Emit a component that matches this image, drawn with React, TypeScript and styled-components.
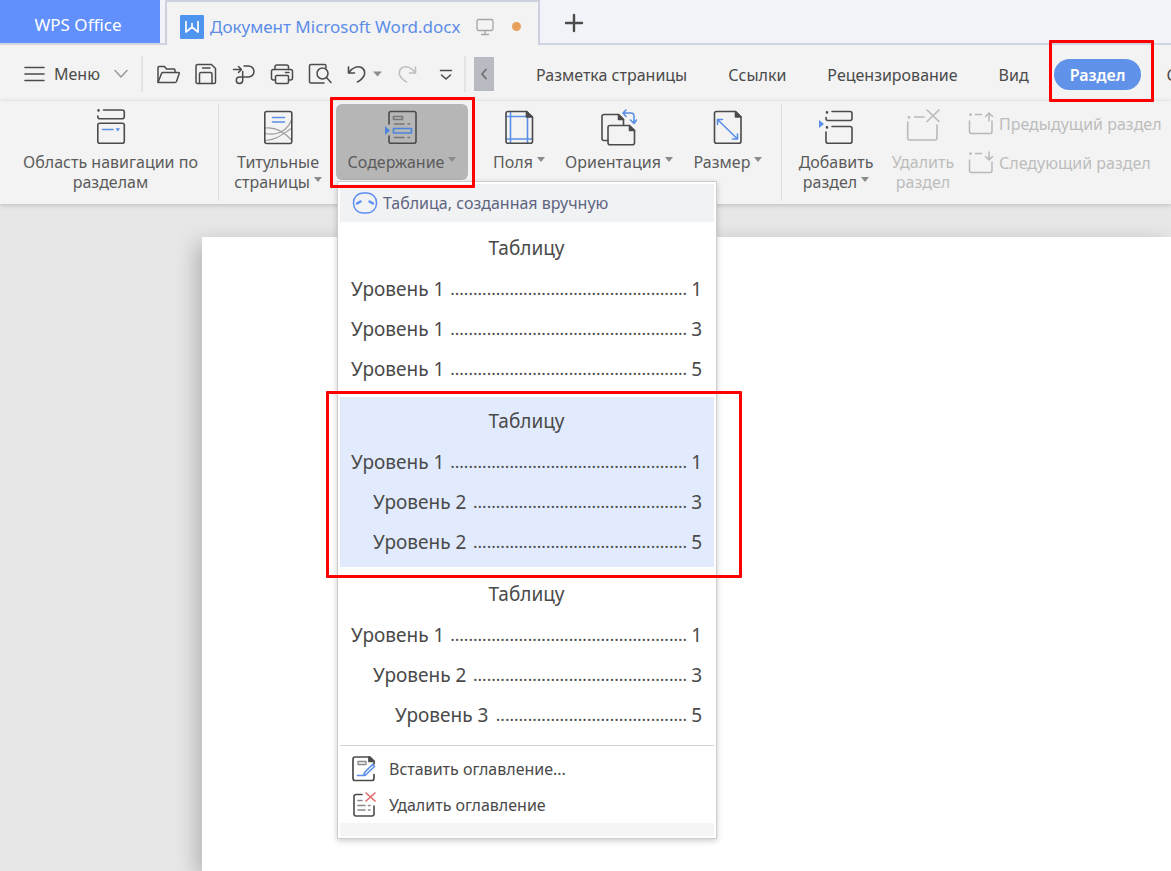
import React from 'react';
import styled, { createGlobalStyle, css } from 'styled-components';

const ink = '#4b4b4b';
const blue = '#5b8fe6';
const grey = '#b9b9b9';

const GlobalStyle = createGlobalStyle`
  *, *::before, *::after { box-sizing: border-box; }
  body {
    margin: 0;
    font-family: "Noto Sans", "Open Sans", sans-serif;
    font-size: 16px;
    line-height: 20px;
    color: #4a4a4a;
    background: #e7e7e7;
  }
  button { font: inherit; color: inherit; background: none; border: 0; padding: 0; margin: 0; cursor: pointer; }
  svg { display: block; fill: none; stroke-linecap: round; stroke-linejoin: round; flex: none; }
`;

const Window = styled.div`
  display: flex;
  flex-direction: column;
  min-height: 100vh;
  overflow: hidden;
`;

/* ---------- title bar ---------- */

const TitleBar = styled.header`
  display: flex;
  height: 45px;
  background: #f2f3f8;
`;

const HomeTab = styled.button`
  width: 160px;
  height: 43px;
  padding: 7px 4px 0 0;
  font-size: 17px;
  color: #fff;
  background: #618ffc;
`;

const StripEdge = styled.div<{ $fill?: boolean }>`
  display: flex;
  border-bottom: 2px solid #cfd5e2;
  padding-right: ${p => (p.$fill ? 0 : '5px')};
  flex: ${p => (p.$fill ? '1' : 'none')};
`;

const DocumentTab = styled.div`
  display: flex;
  align-items: center;
  width: 375px;
  padding: 6px 14px 0 13px;
  border: 2px solid #cbd1de;
  border-bottom: 0;
  background: #f3f3f3;
  color: #5c8de8;
  white-space: nowrap;
`;

const DocumentName = styled.span`
  flex: none;
  margin: 0 16px 0 6px;
  font-size: 17px;
`;

const UnsavedDot = styled.span`
  width: 9px;
  height: 9px;
  margin-left: 18px;
  border-radius: 50%;
  background: #e8a15a;
`;

const NewTab = styled.button`
  margin: 3px 0 0 24px;
`;

/* ---------- menu row ---------- */

const MenuRow = styled.div`
  display: flex;
  align-items: center;
  height: 56px;
  padding: 2px 0 0 24px;
  background: #f3f3f3;
  white-space: nowrap;
`;

const MainMenu = styled.button`
  display: flex;
  align-items: center;
  gap: 9px;
  flex: none;
  width: 117px;
`;

const MenuLabel = styled.span`
  margin-right: 4px;
`;

const Divider = styled.span`
  flex: none;
  width: 2px;
  height: 36px;
  background: #e3e3e3;
`;

const QuickTools = styled.div`
  display: flex;
  align-items: center;
  gap: 14px;
  width: 321px;
  flex: none;
  padding-left: 13px;
`;

const SplitTool = styled.button`
  display: flex;
  align-items: center;
  gap: 3px;
`;

const ScrollTabs = styled.button`
  display: grid;
  place-items: center;
  flex: none;
  width: 20px;
  height: 34px;
  margin-left: 8px;
  background: #b8bbc2;
`;

const RibbonTabs = styled.nav`
  display: flex;
  gap: 9px;
  padding-left: 26px;
`;

const RibbonTab = styled.button<{ $active?: boolean }>`
  position: relative;
  flex: none;
  height: 31px;
  padding: 1px 16px 0;
  border-radius: 16px;
  ${p => p.$active && css`
    color: #fff;
    font-weight: 600;
    background: #5f92e8;
  `}
`;

/* Red frame that points the reader at a control; $inset is top right bottom left. */
const Callout = styled.span<{ $inset: string }>`
  position: absolute;
  inset: ${p => p.$inset};
  border: 3px solid #fe0000;
  border-radius: 1px;
  pointer-events: none;
  z-index: 5;
`;

/* ---------- ribbon ---------- */

const Ribbon = styled.section`
  position: relative;
  z-index: 2;
  display: flex;
  height: 103px;
  padding-top: 3px;
  background: #f3f3f3;
  color: #5b5b5b;
  white-space: nowrap;
  box-shadow: 0 1px 5px rgba(0, 0, 0, 0.2);
`;

const Group = styled.div<{ $pad: string; $rule?: boolean }>`
  display: flex;
  flex: none;
  gap: 4px;
  padding: ${p => p.$pad};
  height: 97px;
  ${p => p.$rule && css`border-right: 1px solid #dedede;`}
`;

const BigButton = styled.button<{ $width: number; $pressed?: boolean }>`
  display: flex;
  flex-direction: column;
  align-items: center;
  gap: 6px;
  width: ${p => p.$width}px;
  height: ${p => (p.$pressed ? '76px' : '94px')};
  padding-top: 4px;
  border-radius: 6px;
  background: ${p => (p.$pressed ? '#b6b6b6' : 'none')};
  &:disabled { color: #bdbdbd; }
`;

const Anchor = styled.div`
  position: relative;
  height: 76px;
`;

const Caret = styled.span`
  display: inline-block;
  margin-left: 4px;
  vertical-align: 6px;
  border: 4px solid transparent;
  border-top: 5px solid #8a8a8a;
  border-bottom: 0;
`;

const SmallStack = styled.div`
  display: flex;
  flex-direction: column;
  gap: 15px;
  padding: 8px 0 0 8px;
`;

const SmallButton = styled.button`
  display: flex;
  align-items: center;
  gap: 5px;
  height: 24px;
  &:disabled { color: #bdbdbd; }
`;

/* ---------- contents menu ---------- */

const Menu = styled.div`
  position: absolute;
  top: 77px;
  left: 1px;
  width: 380px;
  padding: 2px;
  border: 1px solid #cdcdcd;
  background: #fff;
  box-shadow: 0 2px 6px rgba(0, 0, 0, 0.2);
  color: #4a4a4a;
`;

const MenuHeading = styled.div`
  display: flex;
  align-items: center;
  gap: 5px;
  height: 38px;
  margin-bottom: 2px;
  padding-left: 12px;
  background: #f1f2f4;
  color: #5f6480;
`;

const Preview = styled.button<{ $hot?: boolean }>`
  position: relative;
  display: block;
  width: 100%;
  height: 170px;
  margin-bottom: 3px;
  padding: 3px 12px 5px 11px;
  font-size: 19px;
  background: ${p => (p.$hot ? '#e2ebfd' : 'none')};
`;

const PreviewTitle = styled.span`
  display: block;
  line-height: 42px;
`;

const Line = styled.span<{ $level: number }>`
  display: flex;
  gap: 4px;
  line-height: 40px;
  padding-left: ${p => (p.$level - 1) * 22}px;
`;

const Leader = styled.span`
  flex: 1;
  text-align: right;
  font-size: 17px;
`;

const Commands = styled.div`
  margin-top: 5px;
  padding-top: 5px;
  border-top: 1px solid #d4d4d4;
`;

const Command = styled.button`
  display: flex;
  align-items: center;
  gap: 13px;
  width: 100%;
  height: 36px;
  padding-left: 12px;
`;

const MenuFoot = styled.div`
  height: 13px;
  background: #f5f5f5;
`;

/* ---------- document ---------- */

const Workspace = styled.main`
  display: flex;
  flex: 1;
  padding: 33px 0 0 202px;
  background: #e7e7e7;
`;

const Sheet = styled.div`
  flex: 1;
  background: #fff;
  box-shadow: -6px 6px 20px rgba(0, 0, 0, 0.22);
`;

/* ---------- icons ---------- */

type IconProps = { w?: number; h?: number; color?: string; sw?: number; children: React.ReactNode };
const Icon = ({ w = 24, h = 24, color = ink, sw = 1.5, children }: IconProps) => (
  <svg width={w} height={h} viewBox={`0 0 ${w} ${h}`} stroke={color} strokeWidth={sw} aria-hidden="true">
    {children}
  </svg>
);
const BigIcon = ({ color, children }: { color?: string; children: React.ReactNode }) => (
  <Icon w={36} h={38} sw={1.6} color={color}>{children}</Icon>
);

const previews = [
  { levels: [1, 1, 1] },
  { levels: [1, 2, 2], hot: true },
  { levels: [1, 2, 3] },
];
const pages = [1, 3, 5];

export default function App() {
  return (
    <Window>
      <GlobalStyle />
      <TitleBar>
        <StripEdge>
          <HomeTab>WPS Office</HomeTab>
        </StripEdge>
        <DocumentTab>
          <svg width="24" height="24" viewBox="0 0 24 24" aria-hidden="true">
            <rect width="24" height="24" rx="1" fill="#4f95f0" />
            <path d="M6 6.5V17l6-5 6 5V6.500M12 8.500V12" stroke="#fff" strokeWidth="1.700" />
          </svg>
          <DocumentName>Документ Microsoft Word.docx</DocumentName>
          <Icon w={18} h={18} color="#a5a5a5" sw={1.3}>
            <rect x="1" y="1.500" width="16" height="11" rx="1.500" />
            <path d="M9 12.500V16.500M5.500 16.500h7" />
          </Icon>
          <UnsavedDot />
        </DocumentTab>
        <StripEdge $fill>
          <NewTab aria-label="Новая вкладка">
            <Icon w={20} h={20} sw={2.4}><path d="M10 2v16M2 10h16" /></Icon>
          </NewTab>
        </StripEdge>
      </TitleBar>

      <MenuRow>
        <MainMenu>
          <Icon w={21} h={16} sw={1.6}><path d="M1 1.500h19M1 8h19M1 14.500h19" /></Icon>
          <MenuLabel>Меню</MenuLabel>
          <Icon w={16} h={10} color="#9a9a9a" sw={1.5}><path d="M2 1.500l6 6.500 6-6.500" /></Icon>
        </MainMenu>
        <Divider />
        <QuickTools>
          <button aria-label="Открыть">
            <Icon>
              <path d="M2 20V5.500q0-1 1-1h5.500l2 2.500H18q1 0 1 1V10.500" />
              <path d="M2 20.500 5.500 11.500q.4-1 1.500-1h15.500q1 0 .7 1L20.500 19.500q-.4 1-1.500 1z" />
            </Icon>
          </button>
          <button aria-label="Сохранить">
            <Icon>
              <path d="M2 4q0-1.500 1.500-1.500H17.500L21.500 6.500V20q0 1.500-1.500 1.500H3.500Q2 21.500 2 20z" />
              <path d="M5.500 21.500V12q0-1.500 1.500-1.500h9.500q1.500 0 1.500 1.500v9.500M8.500 6H16" />
            </Icon>
          </button>
          <button aria-label="Экспорт в PDF">
            <Icon>
              <path d="M1.500 7.500H9M6.500 4.500l3 3-3 3" />
              <path d="M12 4h4.500a5.500 5.500 0 0 1 0 11H7.500a3.200 3.200 0 1 0 3.200 3.200V9.500" />
            </Icon>
          </button>
          <button aria-label="Печать">
            <Icon>
              <path d="M5 7.500V5q0-2 2-2H16.500q2 0 2 2V7.500" />
              <path d="M5.500 18H3.500Q1.500 18 1.500 16V9.500q0-2 2-2H20.500q2 0 2 2V16q0 2-2 2H18.500M15.500 10.500h3.500" />
              <path d="M5.500 14.500q0-1 1-1h11q1 0 1 1V20q0 1.500-1.500 1.500H7q-1.500 0-1.500-1.500z" />
            </Icon>
          </button>
          <button aria-label="Предварительный просмотр">
            <Icon>
              <path d="M16 21H3Q1.500 21 1.500 19.500V4Q1.500 2.500 3 2.500H16.500q1.500 0 1.500 1.500V6" />
              <circle cx="14.500" cy="11.500" r="5.500" />
              <path d="M18.500 15.500l4.500 5" />
            </Icon>
          </button>
          <SplitTool aria-label="Отменить">
            <Icon sw={1.6}><path d="M2.500 5v6H8.500M3 10.500C6 5.500 12 3.500 15.500 5.500q4 2.500 3 7Q17 17 11.500 20" /></Icon>
            <Icon w={9} h={6} color="none"><path d="M0 .5h9L4.500 5.500z" fill="#8e8e8e" /></Icon>
          </SplitTool>
          <button aria-label="Повторить">
            <Icon color="#c0c0c0" sw={1.6}><path d="M19.500 5v6H13.500M19 10.500C16 5.500 10 3.500 6.500 5.500q-4 2.500-3 7Q5 17 10.500 20" /></Icon>
          </button>
          <button aria-label="Настроить панель">
            <Icon sw={1.6}><path d="M6.500 8.500h11M7.500 13l4.500 4 4.500-4" /></Icon>
          </button>
        </QuickTools>
        <Divider />
        <ScrollTabs aria-label="Прокрутить вкладки">
          <Icon w={8} h={12} color="#6e6e6e" sw={1.8}><path d="M6 1.500L2 6l4 4.500" /></Icon>
        </ScrollTabs>
        <RibbonTabs>
          <RibbonTab>Разметка страницы</RibbonTab>
          <RibbonTab>Ссылки</RibbonTab>
          <RibbonTab>Рецензирование</RibbonTab>
          <RibbonTab>Вид</RibbonTab>
          <RibbonTab $active>
            Раздел
            <Callout $inset="-19px -13px -12px -5px" />
          </RibbonTab>
          <RibbonTab>С</RibbonTab>
        </RibbonTabs>
      </MenuRow>

      <Ribbon>
        <Group $pad="0 5px 0 8px" $rule>
          <BigButton $width={205}>
            <BigIcon>
              <path d="M10.500 2H29q2.300 0 2.300 2V8.500q0 2.300-2.300 2.300H7Q4.800 10.800 4.800 8.500V8" />
              <rect x="4.800" y="15.300" width="26.500" height="20" rx="2" />
              <path d="M5.500 2.200v.3" strokeWidth="2.500" />
              <path d="M9.500 21.500H20" stroke={blue} />
              <path d="M22.500 20.300h4.500L24.800 23.500z" fill={blue} stroke="none" />
            </BigIcon>
            <span>Область навигации по<br />разделам</span>
          </BigButton>
        </Group>

        <Group $pad="0 4px 0 5px">
          <BigButton $width={108}>
            <BigIcon>
              <g stroke="#9b9b9b" strokeWidth="1.200">
                <path d="M5.500 20C17 18.500 25 25 31 31.500" />
                <path d="M5.500 25.500C14 27.500 26 25.500 31.500 12" />
                <path d="M5.500 32.500C17 32 23 25.500 31.500 20.500" />
              </g>
              <rect x="4.800" y="3.500" width="27" height="32" rx="2" />
              <path d="M12.500 9.500H24.500M12.500 14H24.500" stroke={blue} />
            </BigIcon>
            <span>Титульные<br />страницы<Caret /></span>
          </BigButton>
          <Anchor>
            <BigButton $width={132} $pressed aria-expanded="true">
              <BigIcon>
                <path d="M5 16V5.500q0-2 2-2H30q2 0 2 2V33.300q0 2-2 2H7q-2 0-2-2V28" />
                <g stroke="#777">
                  <rect x="9.500" y="8.500" width="9" height="3" />
                  <path d="M10.500 16H20M24 16h1.500M10.500 29.500H20M24 29.500h1.500" />
                </g>
                <rect x="9.500" y="20.500" width="18" height="4.500" stroke="#4c83dc" />
                <path d="M1 18l5 4.500-5 4.500z" fill="#4c83dc" stroke="none" />
              </BigIcon>
              <span>Содержание<Caret /></span>
            </BigButton>
            <Menu>
              <MenuHeading>
                <Icon w={26} h={22} color="#5b8df5" sw={1.5}>
                  <rect x="1.500" y="1" width="23" height="20" rx="9.500" />
                  <path d="M5 11.500l3.500-2M21 11.500l-3.500-2" strokeWidth="2.500" />
                </Icon>
                Таблица, созданная вручную
              </MenuHeading>
              {previews.map((p, i) => (
                <Preview key={i} $hot={p.hot}>
                  <PreviewTitle>Таблицу</PreviewTitle>
                  {p.levels.map((level, n) => (
                    <Line key={n} $level={level}>
                      <span>Уровень {level}</span>
                      <Leader>{'.'.repeat(57 - level * 5)}</Leader>
                      <span>{pages[n]}</span>
                    </Line>
                  ))}
                  {p.hot && <Callout $inset="-6px -28px -11px -14px" />}
                </Preview>
              ))}
              <Commands>
                <Command>
                  <Icon w={24} h={26} sw={1.7}>
                    <path d="M22 18.500V22q0 2.500-2 2.500H3Q1 24.500 1 22V3.500Q1 1 3 1H18L22 5V8" />
                    <path d="M17 1v4.500h4.500z" fill={ink} />
                    <rect x="6" y="5.500" width="8" height="3" stroke="#888" strokeWidth="1.300" />
                    <path d="M5.500 19.500H13L22.500 10.500 20.500 8.500 12.500 16.500 12 19.500" stroke={blue} />
                  </Icon>
                  Вставить оглавление...
                </Command>
                <Command>
                  <Icon w={24} h={26} sw={1.6}>
                    <path d="M10 2.500H4Q2 2.500 2 4.500V22q0 2 2 2H20q2 0 2-2V14" />
                    <path d="M6 8.500H10M6 13.500H13M16.500 13.500h1.500M6 18H13M16.500 18h1.500" stroke="#888" />
                    <path d="M14 1l9 8M23 1l-9 8" stroke="#e0696c" />
                  </Icon>
                  Удалить оглавление
                </Command>
              </Commands>
              <MenuFoot />
            </Menu>
            <Callout $inset="-7px -7px -8px -6px" />
          </Anchor>
        </Group>

        <Group $pad="0 7px 0 10px" $rule>
          <BigButton $width={74}>
            <BigIcon>
              <path d="M9.500 4V35M26.500 4V35M5 8.500H31M5 31H31" stroke={blue} />
              <path d="M25.500 3.500H7Q5 3.500 5 5.500V33.300q0 2 2 2H29.500q2 0 2-2V9z" />
              <path d="M25.500 3.500V9H31z" fill={ink} />
            </BigIcon>
            <span>Поля<Caret /></span>
          </BigButton>
          <BigButton $width={118}>
            <BigIcon>
              <path d="M7 32.500H3q-2 0-2-2V8.500q0-2 2-2H17.500L22.500 11.500V17" />
              <path d="M17.500 6.500v5h5z" fill={ink} />
              <path d="M28 17.500H9q-2 0-2 2V34.700q0 2 2 2H31.500q2 0 2-2V22.500z" />
              <path d="M28.500 17.500v5h5z" fill={ink} />
              <path d="M22.500 5H30q3 0 3 3v7M25 2l-3 3 3 3.500M29.500 12l3.500 3.500 2.500-3.500" stroke={blue} />
            </BigIcon>
            <span>Ориентация<Caret /></span>
          </BigButton>
          <BigButton $width={92}>
            <BigIcon>
              <path d="M25.500 3.500H6.500q-2 0-2 2V33.300q0 2 2 2H29q2 0 2-2V9z" />
              <path d="M25.500 3.500V9H31z" fill={ink} />
              <path d="M7.500 11.500L27.500 31M7.500 16.500v-5h5M27.500 26v5h-5" stroke={blue} />
            </BigIcon>
            <span>Размер<Caret /></span>
          </BigButton>
        </Group>

        <Group $pad="0 4px">
          <BigButton $width={100}>
            <BigIcon>
              <path d="M14 3.500H32q2 0 2 2V10.500q0 2-2 2H10q-2 0-2-2V9.500M14 18.500H32q2 0 2 2V33.300q0 2-2 2H10q-2 0-2-2V24" />
              <path d="M9 4.200v.3M9 19.200v.3" strokeWidth="2.600" />
              <path d="M1 12l5 4-5 4z" fill={blue} stroke="none" />
            </BigIcon>
            <span>Добавить<br />раздел<Caret /></span>
          </BigButton>
          <BigButton $width={66} disabled>
            <BigIcon color={grey}>
              <path d="M2.700 14V30q0 2 2 2H30q2 0 2-2V17M9.500 9H19" />
              <path d="M4 9.300v.2" strokeWidth="2.600" />
              <path d="M22 2l12 11.500M34 2L22 13.500" />
            </BigIcon>
            <span>Удалить<br />раздел</span>
          </BigButton>
          <SmallStack>
            <SmallButton disabled>
              <Icon w={26} h={24} color={grey}>
                <path d="M1.500 9V19.500q0 2 2 2H22q2 0 2-2V9M7.500 2.500H13.500M21 9V1M17.500 4.500L21 1l3.500 3.500" />
                <path d="M2.500 2.500v.2" strokeWidth="2.600" />
              </Icon>
              Предыдущий раздел
            </SmallButton>
            <SmallButton disabled>
              <Icon w={26} h={24} color={grey}>
                <path d="M1.500 9V19.500q0 2 2 2H22q2 0 2-2V11M7.500 2.500H13.500M21 1V9M17.500 5.500L21 9l3.500-3.500" />
                <path d="M2.500 2.500v.2" strokeWidth="2.600" />
              </Icon>
              Следующий раздел
            </SmallButton>
          </SmallStack>
        </Group>
      </Ribbon>

      <Workspace>
        <Sheet />
      </Workspace>
    </Window>
  );
}
